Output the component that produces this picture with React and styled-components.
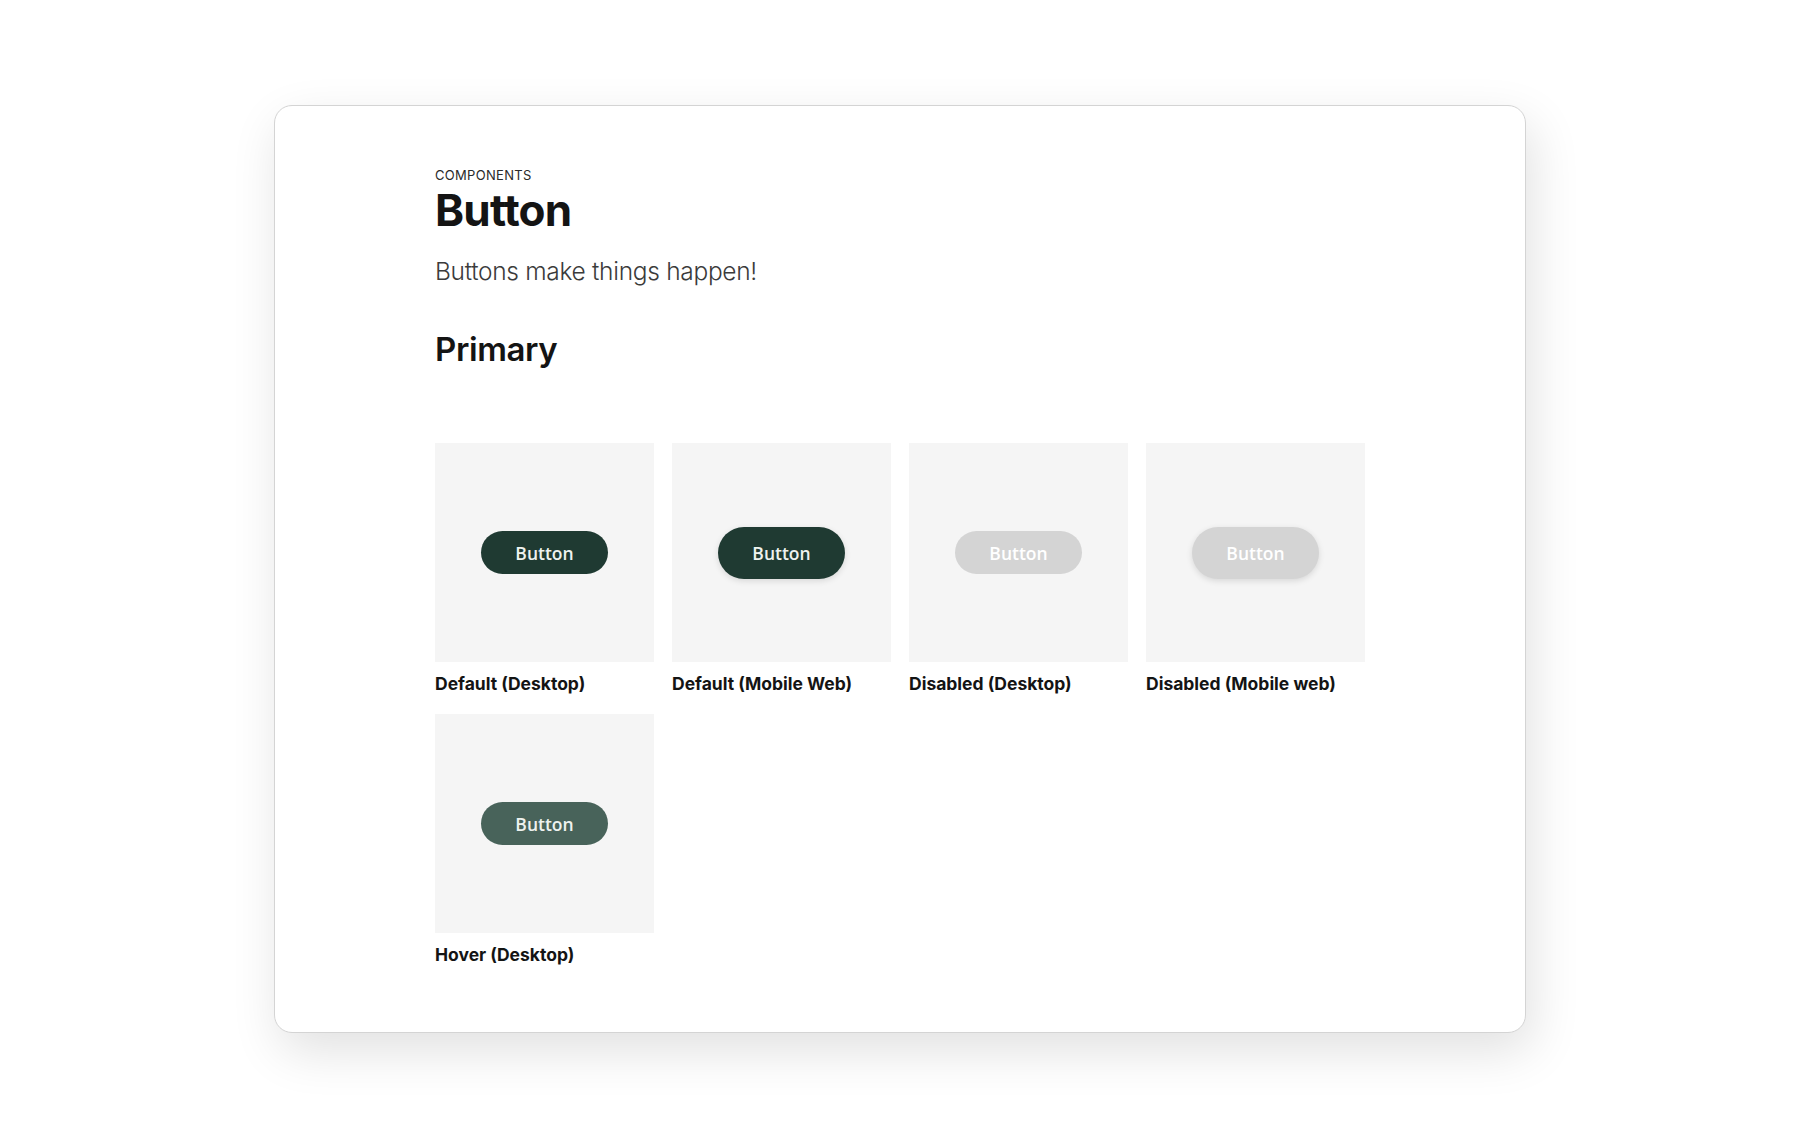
import React from 'react';
import styled, { createGlobalStyle } from 'styled-components';

const GlobalStyle = createGlobalStyle`
    html, body {
        margin: 0;
        padding: 0;
        background: #ffffff;
    }
    body {
        font-family: Inter, "Liberation Sans", sans-serif;
        color: #161616;
    }
`;

const Page = styled.div`
    display: flex;
    align-items: center;
    justify-content: center;
    width: 100%;
    height: 1138px;
`;

const Card = styled.div`
    box-sizing: border-box;
    width: 1252px;
    height: 928px;
    padding: 61px 160px 0 160px;
    background: #ffffff;
    border: 1px solid #d4d4d4;
    border-radius: 18px;
    box-shadow: 6px 18px 50px rgba(0, 0, 0, 0.12);
`;

const Eyebrow = styled.div`
    font-size: 13px;
    line-height: 16px;
    letter-spacing: 0.3px;
    color: #2a2a2a;
    text-transform: uppercase;
`;

const Title = styled.h1`
    margin: 0;
    font-size: 44px;
    line-height: 54px;
    font-weight: 700;
    letter-spacing: -0.8px;
    color: #141414;
`;

const Lead = styled.p`
    margin: 19px 0 0;
    font-size: 24.5px;
    line-height: 30px;
    font-weight: 300;
    letter-spacing: -0.3px;
    color: #3b3b3b;
`;

const SectionTitle = styled.h2`
    margin: 43px 0 0;
    font-size: 33px;
    line-height: 40px;
    font-weight: 600;
    letter-spacing: -0.4px;
    color: #141414;
`;

const Grid = styled.div`
    display: grid;
    grid-template-columns: repeat(4, 219px);
    column-gap: 18px;
    row-gap: 20px;
    margin-top: 74px;
`;

const Item = styled.figure`
    margin: 0;
`;

const Preview = styled.div`
    display: flex;
    align-items: center;
    justify-content: center;
    width: 219px;
    height: 219px;
    background: #f5f5f5;
`;

const Caption = styled.figcaption`
    margin-top: 12px;
    font-size: 17.5px;
    line-height: 20px;
    font-weight: 700;
    color: #141414;
`;

const colors = {
    default: '#1f3a32',
    hover: '#48635a',
    disabled: '#d4d4d4',
};

const DemoButton = styled.button`
    width: 127px;
    height: ${props => (props.mobile ? '52px' : '43px')};
    border: none;
    border-radius: 999px;
    background: ${props => colors[props.variant]};
    color: ${props => (props.variant === 'disabled' ? '#ffffff' : '#eef2ef')};
    font-family: "Open Sans", sans-serif;
    font-size: 17.5px;
    font-weight: 600;
    box-shadow: ${props => (props.mobile ? '0 2px 6px rgba(0, 0, 0, 0.12)' : 'none')};
    cursor: ${props => (props.variant === 'disabled' ? 'default' : 'pointer')};
`;

const examples = [
    { label: 'Default (Desktop)', variant: 'default', mobile: false },
    { label: 'Default (Mobile Web)', variant: 'default', mobile: true },
    { label: 'Disabled (Desktop)', variant: 'disabled', mobile: false },
    { label: 'Disabled (Mobile web)', variant: 'disabled', mobile: true },
    { label: 'Hover (Desktop)', variant: 'hover', mobile: false },
];

export default function App() {
    return (
        <Page>
            <GlobalStyle />
            <Card>
                <Eyebrow>Components</Eyebrow>
                <Title>Button</Title>
                <Lead>Buttons make things happen!</Lead>
                <SectionTitle>Primary</SectionTitle>
                <Grid>
                    {examples.map(ex => (
                        <Item key={ex.label}>
                            <Preview>
                                <DemoButton variant={ex.variant} mobile={ex.mobile}>
                                    Button
                                </DemoButton>
                            </Preview>
                            <Caption>{ex.label}</Caption>
                        </Item>
                    ))}
                </Grid>
            </Card>
        </Page>
    );
}
